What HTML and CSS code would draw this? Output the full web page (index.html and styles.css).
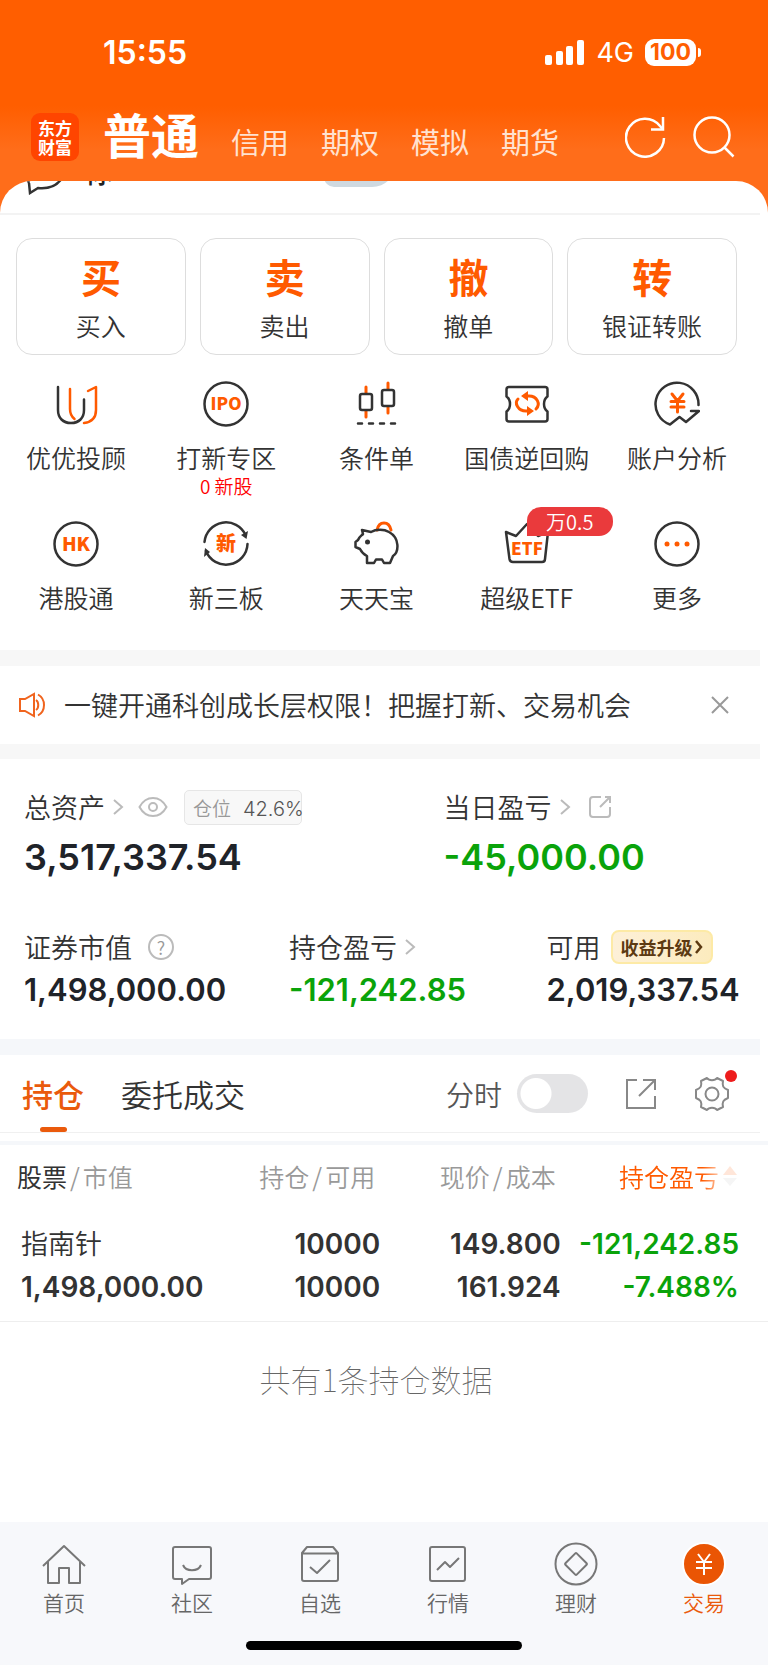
FILE: index.html
```html
<!DOCTYPE html>
<html lang="zh-CN">
<head>
    <meta charset="UTF-8">
    <meta name="viewport" content="width=device-width, initial-scale=1.0">
    <title>东方财富 - 交易</title>
    <link rel="stylesheet" href="styles.css">
</head>
<body>
    <header class="header">
        <div class="status-bar">
            <span class="time">15:55</span>
            <div class="status-right">
                <svg width="40" height="26" viewBox="0 0 40 26" fill="#fff">
                    <rect x="0" y="15" width="7" height="10" rx="2"/>
                    <rect x="11" y="11" width="7" height="14" rx="2"/>
                    <rect x="21" y="6" width="7" height="19" rx="2"/>
                    <rect x="32" y="0" width="7" height="25" rx="2"/>
                </svg>
                <span class="network">4G</span>
                <span class="battery">100</span>
            </div>
        </div>
        <div class="title-row">
            <div class="logo"><span>东方</span><span>财富</span></div>
            <nav class="account-tabs">
                <a href="#" class="active">普通</a>
                <a href="#">信用</a>
                <a href="#">期权</a>
                <a href="#">模拟</a>
                <a href="#">期货</a>
            </nav>
            <div class="header-actions">
                <button type="button" aria-label="刷新">
                    <svg width="42" height="42" viewBox="0 0 42 42" fill="none" stroke="#fff" stroke-width="2.5">
                        <path d="M39 22A19 19 0 1 1 35 10L38 13.500"/>
                        <path d="M38 1V13.500H26"/>
                    </svg>
                </button>
                <button type="button" aria-label="搜索">
                    <svg width="42" height="42" viewBox="0 0 42 42" fill="none" stroke="#fff" stroke-width="2.5">
                        <circle cx="19" cy="19" r="17.500"/>
                        <path d="M31 31L40.500 40.500"/>
                    </svg>
                </button>
            </div>
        </div>
    </header>

    <main class="sheet">
        <!-- Row scrolled under the header -->
        <div class="peek-row">
            <svg width="44" height="38" viewBox="0 0 44 38" fill="none" stroke="#333" stroke-width="2.5">
                <path d="M5 26C-2 10 8 1 20 1C36 1 44 12 38 21C33 29 24 32 14 31L6 36L5 26"/>
            </svg>
            <span class="peek-text">你</span>
            <span class="peek-pill"></span>
        </div>

        <!-- Trade buttons -->
        <div class="trade-cards">
            <button type="button" class="trade-card"><b>买</b><span>买入</span></button>
            <button type="button" class="trade-card"><b>卖</b><span>卖出</span></button>
            <button type="button" class="trade-card"><b>撤</b><span>撤单</span></button>
            <button type="button" class="trade-card"><b>转</b><span>银证转账</span></button>
        </div>

        <!-- Quick entries -->
        <div class="quick-grid">
            <a href="#" class="quick-item">
                <svg width="46" height="46" viewBox="0 0 46 46" class="line-icon">
                    <path d="M5 6V29C5 37 10 42 18 42C26 42 31 37 31 29V18.500"/>
                    <path class="accent" d="M17 8V28C17 33 19 36 21.500 38M35 10L43 6V29C43 36 39 41 31 42"/>
                </svg>
                <span class="quick-label">优优投顾</span>
            </a>
            <a href="#" class="quick-item">
                <svg width="46" height="46" viewBox="0 0 46 46" class="line-icon">
                    <circle cx="23" cy="23" r="21.500"/>
                    <text x="23" y="29" font-size="17">IPO</text>
                </svg>
                <span class="quick-label">打新专区</span>
                <span class="quick-sub">0 新股</span>
            </a>
            <a href="#" class="quick-item">
                <svg width="46" height="46" viewBox="0 0 46 46" class="line-icon">
                    <path class="accent" d="M13 6V12M13 30V36M35 2V8M35 26V32" stroke-width="3"/>
                    <rect x="7" y="13" width="12" height="16" rx="2"/>
                    <rect x="29" y="9" width="12" height="16" rx="2"/>
                    <path d="M5 42.500H9M16 42.500H20M27 42.500H31M38 42.500H42"/>
                </svg>
                <span class="quick-label">条件单</span>
            </a>
            <a href="#" class="quick-item">
                <svg width="46" height="46" viewBox="0 0 46 46" class="line-icon">
                    <path d="M5 6H41Q43.500 6 43.500 8.500V15.500Q40 18 40 23Q40 28 43.500 30.500V38Q43.500 40.500 41 40.500H5Q2.500 40.500 2.500 38V30.500Q6 28 6 23Q6 18 2.500 15.500V8.500Q2.500 6 5 6Z"/>
                    <path class="accent" d="M22 15H25C33 15 37 23 32 28M25 30H22C14 30 10 22 14 18" stroke-width="3"/>
                    <path class="fill" d="M24 10V20L17 15ZM23 25V35L30 30Z"/>
                </svg>
                <span class="quick-label">国债逆回购</span>
            </a>
            <a href="#" class="quick-item">
                <svg width="46" height="46" viewBox="0 0 46 46" class="line-icon">
                    <path d="M44.500 24A21.500 21.500 0 1 0 16 43.500L25.500 36L32 41L45 30H37"/>
                    <path class="accent" d="M18 13L23.500 20L29 13M23.500 20V31M17 20.500H30M17 26H30" stroke-width="3"/>
                </svg>
                <span class="quick-label">账户分析</span>
            </a>
            <a href="#" class="quick-item">
                <svg width="46" height="46" viewBox="0 0 46 46" class="line-icon">
                    <circle cx="23" cy="23" r="21.500"/>
                    <text x="23" y="30" font-size="19">HK</text>
                </svg>
                <span class="quick-label">港股通</span>
            </a>
            <a href="#" class="quick-item">
                <svg width="46" height="46" viewBox="0 0 46 46" class="line-icon">
                    <path d="M1.500 21A21.500 21.500 0 0 1 42.500 14M44.500 23A21.500 21.500 0 0 1 3 30"/>
                    <path class="dark" d="M45 10L43.500 18L38 14ZM1 36L2 27L7 31Z"/>
                    <text x="23" y="30" font-size="20">新</text>
                </svg>
                <span class="quick-label">新三板</span>
            </a>
            <a href="#" class="quick-item">
                <svg width="46" height="46" viewBox="0 0 46 46" class="line-icon">
                    <path class="accent" d="M24 9C26 -0.500 36 -0.500 38 9" stroke-width="3"/>
                    <path d="M9 9L18 11C23 8 31 8 36 11C47 17 46 31 40 35L37 42H31L29 38.500H23L21 42H14V35C10 33 8 30 7 28L2.500 26V21L5 19C6 16 8 15 10 13Z"/>
                    <circle class="dark" cx="14.500" cy="21" r="2.500"/>
                </svg>
                <span class="quick-label">天天宝</span>
            </a>
            <a href="#" class="quick-item">
                <span class="icon-wrap">
                    <svg width="46" height="46" viewBox="0 0 46 46" class="line-icon">
                        <path d="M2 11L12 15L23 3L34 15L44 11L41 38Q41 41 38 41H9Q6 41 5.500 38Z"/>
                        <text x="23" y="34" font-size="17">ETF</text>
                    </svg>
                    <span class="corner-badge">万0.5</span>
                </span>
                <span class="quick-label">超级ETF</span>
            </a>
            <a href="#" class="quick-item">
                <svg width="46" height="46" viewBox="0 0 46 46" class="line-icon">
                    <circle cx="23" cy="23" r="21.500"/>
                    <g class="fill"><circle cx="13" cy="23" r="2.500"/><circle cx="23" cy="23" r="2.500"/><circle cx="33" cy="23" r="2.500"/></g>
                </svg>
                <span class="quick-label">更多</span>
            </a>
        </div>

        <!-- Notice -->
        <div class="notice">
            <svg width="28" height="26" viewBox="0 0 28 26" fill="none" stroke="#f0641e" stroke-width="2">
                <path d="M2 7H7L16 2V24L7 19H2Z"/>
                <path d="M18 8C21 10 21 16 18 18M20 2.500C28 7 28 19 20 23.500"/>
            </svg>
            <p>一键开通科创成长层权限！把握打新、交易机会</p>
            <button type="button" aria-label="关闭">
                <svg width="20" height="20" viewBox="0 0 20 20" fill="none" stroke="#999" stroke-width="2"><path d="M2 2L18 18M18 2L2 18"/></svg>
            </button>
        </div>

        <!-- Assets -->
        <section class="assets">
            <div class="assets-total">
                <div>
                    <div class="asset-label">总资产
                        <svg class="chevron" width="12" height="18" viewBox="0 0 12 18"><path d="M2 2L10 9L2 16"/></svg>
                        <svg class="eye" width="30" height="22" viewBox="0 0 30 22"><path d="M1.500 11C8 -1 22 -1 28.500 11C22 23 8 23 1.500 11Z"/><circle cx="15" cy="11" r="4"/></svg>
                        <span class="position-tag">仓位<i>42.6%</i></span>
                    </div>
                    <div class="asset-value big">3,517,337.54</div>
                </div>
                <div>
                    <div class="asset-label">当日盈亏
                        <svg class="chevron" width="12" height="18" viewBox="0 0 12 18"><path d="M2 2L10 9L2 16"/></svg>
                        <svg class="share" width="24" height="24" viewBox="0 0 24 24"><path d="M13 2H5Q2 2 2 5V19Q2 22 5 22H19Q22 22 22 19V12M17 2H22V8M22 2L12 12"/></svg>
                    </div>
                    <div class="asset-value big down">-45,000.00</div>
                </div>
            </div>
            <div class="assets-detail">
                <div>
                    <div class="asset-label">证券市值
                        <span class="help">?</span>
                    </div>
                    <div class="asset-value">1,498,000.00</div>
                </div>
                <div>
                    <div class="asset-label">持仓盈亏
                        <svg class="chevron" width="12" height="18" viewBox="0 0 12 18"><path d="M2 2L10 9L2 16"/></svg>
                    </div>
                    <div class="asset-value down">-121,242.85</div>
                </div>
                <div>
                    <div class="asset-label">可用
                        <a href="#" class="upgrade">收益升级<svg width="8" height="14" viewBox="0 0 8 14" fill="none" stroke="#5c3a12" stroke-width="2.5"><path d="M1 1L6 7L1 13"/></svg></a>
                    </div>
                    <div class="asset-value">2,019,337.54</div>
                </div>
            </div>
        </section>

        <!-- Positions -->
        <section class="positions">
            <div class="position-bar">
                <button type="button" class="tab active">持仓</button>
                <button type="button" class="tab">委托成交</button>
                <label class="switch">分时<input type="checkbox" role="switch"></label>
                <button type="button" class="icon-btn" aria-label="分享">
                    <svg width="32" height="32" viewBox="0 0 32 32" fill="none" stroke="#888" stroke-width="2"><path d="M12 2H2V30H30V18M18 2H30V12M30 2L14 18"/></svg>
                </button>
                <button type="button" class="icon-btn settings" aria-label="设置">
                    <svg width="36" height="36" viewBox="0 0 36 36" fill="none" stroke="#888" stroke-width="2" stroke-linejoin="round">
                        <path d="M13 2C15 5 21 5 23 2L29 5C28 10 29 12 34 14V22C29 24 28 26 29 31L23 34C21 31 15 31 13 34L7 31C8 26 7 24 2 22V14C7 12 8 10 7 5Z"/>
                        <circle cx="18" cy="18" r="6.500"/>
                    </svg>
                </button>
            </div>
            <table class="position-table">
                <thead>
                    <tr>
                        <th><b>股票</b><s>/</s>市值</th>
                        <th>持仓<s>/</s>可用</th>
                        <th>现价<s>/</s>成本</th>
                        <th class="sorted"><span class="fade">持仓盈亏<svg width="16" height="22" viewBox="0 0 16 22"><path d="M1 10L8 1L15 10Z" fill="#ff5a00"/><path d="M1 13L8 21L15 13Z" fill="#bbb"/></svg></span></th>
                    </tr>
                </thead>
                <tbody>
                    <tr>
                        <td><div class="stock-name">指南针</div><div>1,498,000.00</div></td>
                        <td><div>10000</div><div>10000</div></td>
                        <td><div>149.800</div><div>161.924</div></td>
                        <td class="down"><div>-121,242.85</div><div>-7.488%</div></td>
                    </tr>
                </tbody>
            </table>
            <p class="position-count">共有1条持仓数据</p>
        </section>
    </main>

    <footer class="footer">
        <nav class="tab-bar">
            <a href="#">
                <svg width="46" height="46" viewBox="0 0 46 46"><path d="M2 24L23 4L44 24M7 20V41H18V26H28V41H39V20"/></svg>
                首页
            </a>
            <a href="#">
                <svg width="46" height="46" viewBox="0 0 46 46"><path d="M6 5H40Q42 5 42 7V35Q42 37 40 37H20L13 42V37H6Q4 37 4 35V7Q4 5 6 5Z"/><path d="M14 23C17 30 29 30 32 23"/></svg>
                社区
            </a>
            <a href="#">
                <svg width="46" height="46" viewBox="0 0 46 46"><path d="M5 11L10 5H36L41 11V37Q41 39 39 39H7Q5 39 5 37ZM5 11.500H41M13 25L20 31L33 18"/></svg>
                自选
            </a>
            <a href="#">
                <svg width="46" height="46" viewBox="0 0 46 46"><rect x="5" y="5" width="35" height="34" rx="2"/><path d="M12 28L20 20L25 25L34 16"/></svg>
                行情
            </a>
            <a href="#">
                <svg width="46" height="46" viewBox="0 0 46 46"><circle cx="23" cy="22" r="20.500"/><rect x="15" y="14" width="16" height="16" rx="1" transform="rotate(45 23 22)"/></svg>
                理财
            </a>
            <a href="#" class="active">
                <svg width="46" height="46" viewBox="0 0 46 46"><circle cx="23" cy="22" r="21"/><path d="M17 12L23 20L29 12M23 20V33M15 20H31M15 26H31"/></svg>
                交易
            </a>
        </nav>
        <div class="home-indicator"></div>
    </footer>
</body>
</html>
```
FILE: styles.css
```css
* {
    margin: 0;
    padding: 0;
    box-sizing: border-box;
}

body {
    display: flex;
    flex-direction: column;
    min-height: 100vh;
    font-family: "Noto Sans CJK SC", sans-serif;
    font-weight: 350;
    background: #fff;
    color: #333;
}

a {
    color: inherit;
    text-decoration: none;
}

button {
    border: none;
    background: none;
    font: inherit;
    color: inherit;
    cursor: pointer;
}

svg {
    display: block;
    flex: none;
}

/* Header */
.header {
    height: 216px;
    background: linear-gradient(#ff5e00 106px, #ff6d1a 150px);
    color: #fff;
}

.status-bar {
    display: flex;
    justify-content: space-between;
    align-items: center;
    height: 105px;
    padding: 0 67px 0 103px;
    font-family: Inter, sans-serif;
}

.time {
    font-size: 32px;
    font-weight: 600;
}

.status-right {
    display: flex;
    align-items: center;
    gap: 11px;
}

.network {
    font-size: 27px;
    font-weight: 400;
    line-height: 28px;
}

.battery {
    position: relative;
    width: 51px;
    margin-right: 5px;
    border-radius: 9px;
    background: #fff;
    color: #ff5e00;
    font-size: 23px;
    font-weight: 700;
    line-height: 27px;
    text-align: center;
}

.battery::after {
    content: "";
    position: absolute;
    top: 9px;
    right: -5px;
    width: 3px;
    height: 9px;
    border-radius: 0 4px 4px 0;
    background: #fff;
}

.title-row {
    display: flex;
    align-items: center;
    height: 64px;
    padding: 0 33px 0 31px;
}

.logo {
    display: flex;
    flex-direction: column;
    justify-content: center;
    width: 48px;
    height: 48px;
    border-radius: 9px;
    background: #ff4500;
    font-size: 17px;
    font-weight: 700;
    line-height: 19px;
    text-align: center;
}

.account-tabs {
    display: flex;
    align-items: baseline;
    gap: 32px;
    margin-left: 24px;
    font-size: 29px;
    font-weight: 400;
    line-height: 64px;
    color: #ffe2d0;
}

.account-tabs .active {
    font-size: 48px;
    font-weight: 700;
    color: #fff;
}

.header-actions {
    display: flex;
    gap: 26px;
    margin-left: auto;
}

/* White sheet */
.sheet {
    margin-top: -35px;
    border-radius: 32px 32px 0 0;
    background: #fff;
    overflow: hidden;
}

.peek-row {
    display: flex;
    align-items: flex-start;
    height: 34px;
    margin-right: 8px;
    padding-left: 24px;
    border-bottom: 2px solid #f3f3f3;
}

.peek-row svg {
    margin-top: -24px;
}

.peek-text {
    margin: -25px 0 0 17px;
    font-size: 28px;
    font-weight: 500;
    line-height: 30px;
    color: #222;
}

.peek-pill {
    width: 72px;
    height: 30px;
    margin: -24px 0 0 211px;
    border-radius: 6px 6px 24px 10px;
    background: #cfd9e0;
}

.trade-cards {
    display: grid;
    grid-template-columns: repeat(4, 1fr);
    gap: 14px;
    padding: 23px 31px 0 16px;
}

.trade-card {
    padding: 15px 0 14px;
    border: 1px solid #ddd;
    border-radius: 16px;
}

.trade-card b {
    display: block;
    margin-bottom: 12px;
    font-size: 40px;
    font-weight: 700;
    line-height: 44px;
    color: #ff5a00;
}

.trade-card span {
    display: block;
    font-size: 25px;
    line-height: 30px;
}

.quick-grid {
    display: grid;
    grid-template-columns: repeat(5, 1fr);
    row-gap: 23px;
    padding: 26px 16px 38px 1px;
}

.quick-item {
    display: flex;
    flex-direction: column;
    align-items: center;
}

.quick-label {
    margin-top: 15px;
    font-size: 25px;
    line-height: 30px;
    white-space: nowrap;
}

.quick-sub {
    margin-top: 2px;
    font-size: 19px;
    line-height: 24px;
    color: #f00;
}

.line-icon {
    fill: none;
    stroke: #333;
    stroke-width: 2.5;
    stroke-linecap: round;
    stroke-linejoin: round;
}

.line-icon .accent {
    stroke: #ff5a00;
}

.line-icon .fill {
    fill: #ff5a00;
    stroke: none;
}

.line-icon .dark {
    fill: #333;
    stroke: none;
}

.line-icon text {
    fill: #ff5a00;
    stroke: none;
    font-weight: 900;
    text-anchor: middle;
}

.icon-wrap {
    position: relative;
}

.corner-badge {
    position: absolute;
    top: -14px;
    left: 23px;
    width: 86px;
    border-radius: 14px 14px 14px 0;
    background: #ea3a3c;
    color: #fff;
    font-size: 20px;
    line-height: 29px;
    text-align: center;
}

/* Notice */
.notice {
    display: flex;
    align-items: center;
    margin-right: 8px;
    padding: 19px 30px 19px 18px;
    border-top: 16px solid #f7f7f7;
    border-bottom: 15px solid #f7f7f7;
    font-size: 27px;
    line-height: 40px;
}

.notice p {
    margin-left: 18px;
}

.notice button {
    margin-left: auto;
}

/* Assets */
.assets {
    margin-right: 8px;
    padding: 30px 0 29px 24px;
    border-bottom: 16px solid #f5f7fa;
}

.assets-total,
.assets-detail {
    display: grid;
}

.assets-total {
    grid-template-columns: 57% 43%;
    margin-bottom: 50px;
}

.assets-detail {
    grid-template-columns: 36% 35% 29%;
}

.asset-label {
    display: flex;
    align-items: center;
    font-size: 27px;
    line-height: 36px;
    white-space: nowrap;
}

.asset-value {
    margin-top: 5px;
    font-family: Inter, sans-serif;
    font-size: 31px;
    font-weight: 600;
    line-height: 40px;
    color: #1f2329;
}

.asset-value.big {
    margin-top: 10px;
    font-size: 36px;
    line-height: 44px;
}

.asset-value.down,
.position-table .down {
    color: #0aa30a;
}

.chevron,
.eye,
.share {
    fill: none;
    stroke: #bbb;
    stroke-width: 2;
}

.chevron {
    margin-left: 7px;
}

.eye {
    margin-left: 14px;
}

.share {
    margin-left: 17px;
}

.position-tag {
    display: flex;
    gap: 12px;
    width: 118px;
    height: 35px;
    margin-left: 16px;
    padding-left: 8px;
    border: 1px solid #e6e6e6;
    border-radius: 5px;
    background: #f8f8f8;
    font-size: 19px;
    line-height: 33px;
    color: #999;
}

.position-tag i {
    font-family: Inter, sans-serif;
    font-size: 20px;
    font-style: normal;
    line-height: 37px;
    color: #555;
}

.help {
    width: 26px;
    height: 26px;
    margin-left: 16px;
    border: 2px solid #bbb;
    border-radius: 50%;
    font-size: 18px;
    line-height: 22px;
    text-align: center;
    color: #999;
}

.upgrade {
    display: flex;
    align-items: center;
    gap: 2px;
    height: 34px;
    margin-left: 10px;
    padding: 0 8px;
    border: 2px solid #fdeaa6;
    border-radius: 8px;
    background: linear-gradient(90deg, #fdf0d8, #fcebbe);
    font-size: 18px;
    font-weight: 700;
    color: #5c3a12;
}

/* Positions */
.position-bar {
    display: flex;
    align-items: center;
    height: 78px;
    margin-right: 8px;
    padding: 0 30px 0 22px;
    border-bottom: 1px solid #f0f0f0;
}

.tab {
    position: relative;
    margin-right: 37px;
    font-size: 31px;
    line-height: 77px;
}

.tab.active {
    font-weight: 500;
    color: #ea5a0c;
}

.tab.active::after {
    content: "";
    position: absolute;
    bottom: 0;
    left: 18px;
    width: 27px;
    height: 5px;
    border-radius: 3px;
    background: #ea5a0c;
}

.switch {
    display: flex;
    align-items: center;
    gap: 15px;
    margin-left: auto;
    font-size: 28px;
    color: #555;
}

.switch input {
    appearance: none;
    width: 71px;
    height: 39px;
    border-radius: 20px;
    background: radial-gradient(circle at 19px 50%, #fff 15px, #e4e4e6 16px);
}

.icon-btn {
    margin-left: 37px;
}

.settings {
    position: relative;
}

.settings::after {
    content: "";
    position: absolute;
    top: -6px;
    right: -7px;
    width: 12px;
    height: 12px;
    border-radius: 50%;
    background: #ee1c1c;
}

.position-table {
    width: 100%;
    margin-top: 8px;
    border-collapse: collapse;
    border-top: 4px solid #f5f7fa;
    table-layout: fixed;
}

.position-table th {
    height: 63px;
    padding-right: 5px;
    font-size: 25px;
    font-weight: 350;
    text-align: right;
    white-space: nowrap;
    color: #999;
}

.position-table th:first-child {
    width: 26%;
    padding-left: 17px;
    text-align: left;
}

.position-table th:last-child {
    width: 27%;
}

.position-table b {
    font-weight: 400;
    color: #333;
}

.position-table s {
    padding: 0 3px;
    text-decoration: none;
}

.position-table .sorted {
    padding-right: 30px;
    color: #ff5a00;
}

.fade {
    display: inline-flex;
    align-items: center;
    gap: 3px;
    mask-image: linear-gradient(90deg, #000 70%, rgba(0, 0, 0, 0.15) 88%);
}

.position-table td {
    padding: 17px 0 12px;
    border-bottom: 1px solid #eee;
    font-family: Inter, "Noto Sans CJK SC", sans-serif;
    font-size: 28px;
    font-weight: 600;
    line-height: 43px;
    text-align: right;
}

.position-table td:first-child {
    padding-left: 21px;
    text-align: left;
}

.position-table td:last-child {
    padding-right: 29px;
}

.position-table .stock-name {
    font-size: 27px;
    font-weight: 350;
}

.position-count {
    margin: 34px 16px 0 0;
    font-size: 31px;
    font-weight: 100;
    line-height: 46px;
    text-align: center;
    color: #666;
}

/* Footer */
.footer {
    margin-top: auto;
    padding: 20px 0 15px;
    background: #f7f8fb;
}

.tab-bar {
    display: grid;
    grid-template-columns: repeat(6, 1fr);
}

.tab-bar a {
    display: flex;
    flex-direction: column;
    align-items: center;
    font-size: 21px;
    line-height: 28px;
    color: #666;
}

.tab-bar svg {
    fill: none;
    stroke: #777;
    stroke-width: 2;
    stroke-linejoin: round;
}

.tab-bar .active {
    color: #ea5a0c;
}

.tab-bar .active svg {
    fill: #ea5504;
    stroke: #fff;
}

.home-indicator {
    width: 36%;
    height: 9px;
    margin: 25px auto 0;
    border-radius: 5px;
    background: #000;
}
```
